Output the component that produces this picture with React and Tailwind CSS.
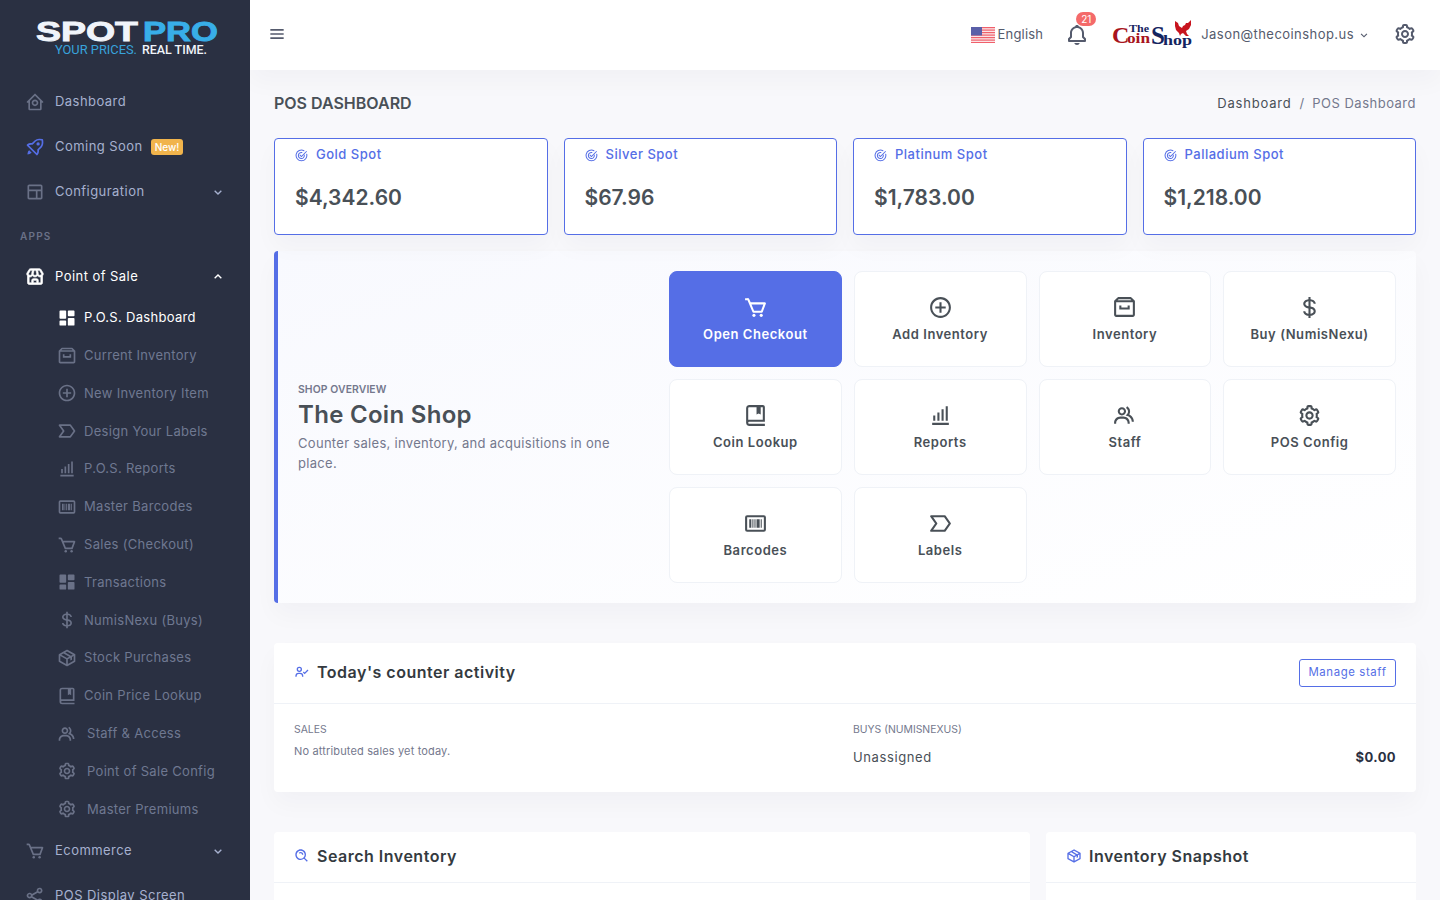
import {
  BiHomeCircle, BiRocket, BiLayout, BiStore, BiSolidDashboard, BiArchive, BiPlusCircle, BiLabel,
  BiBarChartAlt, BiBarcode, BiCart, BiDollar, BiPackage, BiBookBookmark, BiGroup, BiCog, BiShareAlt,
  BiChevronDown, BiChevronUp, BiMenu, BiBell, BiUserCheck, BiSearchAlt,
} from 'react-icons/bi'

const subItems = [
  { label: 'P.O.S. Dashboard', icon: BiSolidDashboard, active: true },
  { label: 'Current Inventory', icon: BiArchive },
  { label: 'New Inventory Item', icon: BiPlusCircle },
  { label: 'Design Your Labels', icon: BiLabel },
  { label: 'P.O.S. Reports', icon: BiBarChartAlt },
  { label: 'Master Barcodes', icon: BiBarcode },
  { label: 'Sales (Checkout)', icon: BiCart },
  { label: 'Transactions', icon: BiSolidDashboard },
  { label: 'NumisNexu (Buys)', icon: BiDollar },
  { label: 'Stock Purchases', icon: BiPackage },
  { label: 'Coin Price Lookup', icon: BiBookBookmark },
  { label: 'Staff & Access', icon: BiGroup, wide: true },
  { label: 'Point of Sale Config', icon: BiCog, wide: true },
  { label: 'Master Premiums', icon: BiCog, wide: true },
]

const spots = [
  { name: 'Gold Spot', price: '$4,342.60' },
  { name: 'Silver Spot', price: '$67.96' },
  { name: 'Platinum Spot', price: '$1,783.00' },
  { name: 'Palladium Spot', price: '$1,218.00' },
]

const tiles = [
  { label: 'Open Checkout', icon: BiCart, primary: true },
  { label: 'Add Inventory', icon: BiPlusCircle },
  { label: 'Inventory', icon: BiArchive },
  { label: 'Buy (NumisNexu)', icon: BiDollar },
  { label: 'Coin Lookup', icon: BiBookBookmark },
  { label: 'Reports', icon: BiBarChartAlt },
  { label: 'Staff', icon: BiGroup },
  { label: 'POS Config', icon: BiCog },
  { label: 'Barcodes', icon: BiBarcode },
  { label: 'Labels', icon: BiLabel },
]

function SpotIcon() {
  return (
    <svg viewBox="0 0 14 14" className="w-[13px] h-[13px] text-[#556ee6]" fill="none" stroke="currentColor" strokeWidth="1.1" strokeLinecap="round">
      <path d="M12.6 5.6A5.8 5.8 0 1 1 9.6 1.8" />
      <path d="M10 6.6A3.2 3.2 0 1 1 7.4 3.9" />
      <path d="M5.4 6.6l1.5 1.5 5.4-5.4" />
    </svg>
  )
}

function SpotLogo() {
  return (
    <div className="h-[79.5px]">
      <svg viewBox="0 0 250 79" className="w-[250px] h-[79px] block">
        <text x="36" y="41" textLength="102" lengthAdjust="spacingAndGlyphs" fontFamily="Liberation Sans, sans-serif" fontWeight="700" fontSize="28" fill="#f0f4fa" stroke="#f0f4fa" strokeWidth="0.9">SPOT</text>
        <text x="143" y="41" textLength="75" lengthAdjust="spacingAndGlyphs" fontFamily="Liberation Sans, sans-serif" fontWeight="700" fontSize="28" fill="#38aee8" stroke="#38aee8" strokeWidth="0.9">PRO</text>
        <text x="55" y="54" textLength="82" lengthAdjust="spacingAndGlyphs" fontFamily="Roboto, sans-serif" fontWeight="400" fontSize="12" fill="#38a3dc">YOUR PRICES.</text>
        <text x="142" y="54" textLength="65" lengthAdjust="spacingAndGlyphs" fontFamily="Roboto, sans-serif" fontWeight="500" fontSize="12" fill="#f0f4fa">REAL TIME.</text>
      </svg>
    </div>
  )
}

function ShopLogo() {
  return (
    <svg viewBox="0 0 82 30" className="w-[82px] h-[30px] block">
      <text x="0" y="23" fontFamily="Liberation Serif, serif" fontWeight="700" fontSize="24" fill="#a81420">C</text>
      <text x="15" y="23" textLength="23" lengthAdjust="spacingAndGlyphs" fontFamily="Liberation Serif, serif" fontWeight="700" fontSize="14" fill="#a81420">oin</text>
      <text x="17" y="12" textLength="20" lengthAdjust="spacingAndGlyphs" fontFamily="Liberation Serif, serif" fontWeight="700" fontSize="10" fill="#14245f">The</text>
      <text x="39" y="24" fontFamily="Liberation Serif, serif" fontWeight="700" fontSize="25" fill="#14245f">S</text>
      <text x="51" y="25" textLength="29" lengthAdjust="spacingAndGlyphs" fontFamily="Liberation Serif, serif" fontWeight="700" fontSize="14" fill="#14245f">hop</text>
      <path d="M63 1l3 2 1 3 3 2 1-2 2-1 1-2 2 0 3-3 0 5-2 4-3 2 1 3 2 2-3 0-3-3-2 1-1 2-1-3-3-3-1-4z" fill="#c8141e" />
    </svg>
  )
}

function Flag() {
  return (
    <svg viewBox="0 0 24 16" className="w-6 h-4 block">
      <rect width="24" height="16" fill="#fbe4e6" />
      {[0, 2.5, 5, 7.5, 10, 12.5, 15].map((y) => (
        <rect key={y} y={y} width="24" height="1.2" fill="#f0606b" />
      ))}
      <rect width="11" height="8.5" fill="#5a5fa8" />
    </svg>
  )
}

function TopItem({ icon: Icon, label, chevron, badge, white, iconColor }) {
  return (
    <div className={`h-[45px] flex items-center pl-[25px] pr-[24px] text-[13px] tracking-[0.45px] ${white ? 'text-white' : 'text-[#a6b0cf]'}`}>
      <Icon className={`w-5 h-5 shrink-0 ${iconColor || 'text-[#6a7187]'} ${white ? '[stroke-width:0.8]' : ''}`} />
      <span className="ml-[10px]">{label}</span>
      {badge && <span className="ml-[8px] rounded-[3px] bg-[#f1b44c] text-white text-[10px] font-medium leading-none px-[4px] py-[3px] tracking-normal">{badge}</span>}
      {chevron === 'down' && <BiChevronDown className={`ml-auto w-4 h-4 ${white ? 'text-white' : 'text-[#a6b0cf]'}`} />}
      {chevron === 'up' && <BiChevronUp className="ml-auto w-4 h-4 text-white" />}
    </div>
  )
}

function SubItem({ item }) {
  const Icon = item.icon
  return (
    <div className={`h-[37.8px] flex items-center pl-[57px] text-[13px] tracking-[0.3px] ${item.active ? 'text-white' : 'text-[#6f7891]'}`}>
      <Icon className={`w-5 h-5 shrink-0 ${item.active ? 'text-white' : 'text-[#6a7187]'}`} />
      <span className={item.wide ? 'ml-[10px]' : 'ml-[7px]'}>{item.label}</span>
    </div>
  )
}

function Sidebar() {
  return (
    <aside className="w-[250px] shrink-0 h-screen overflow-hidden bg-[#2a3042]">
      <SpotLogo />
      <TopItem icon={BiHomeCircle} label="Dashboard" />
      <TopItem icon={BiRocket} label="Coming Soon" badge="New!" iconColor="text-[#556ee6]" />
      <TopItem icon={BiLayout} label="Configuration" chevron="down" />
      <div className="h-[39.5px] flex items-center pl-5 pt-1 text-[10px] font-semibold tracking-[1.2px] text-[#6a7187]">APPS</div>
      <TopItem icon={BiStore} label="Point of Sale" chevron="up" white iconColor="text-white" />
      {subItems.map((item) => (
        <SubItem key={item.label} item={item} />
      ))}
      <TopItem icon={BiCart} label="Ecommerce" chevron="down" />
      <TopItem icon={BiShareAlt} label="POS Display Screen" />
    </aside>
  )
}

function Header() {
  return (
    <header className="h-[70px] shrink-0 bg-white flex items-center pl-[16.5px] pr-[23px] shadow-[0_12px_24px_rgba(18,38,63,0.03)] relative">
      <BiMenu className="w-5 h-5 -mt-[2px] text-[#555b6d]" />
      <div className="ml-auto flex items-center">
        <Flag />
        <span className="ml-[3px] text-[13px] tracking-[0.2px] text-[#555b6d]">English</span>
        <div className="relative ml-[21.5px]">
          <BiBell className="w-6 h-6 text-[#555b6d]" />
          <span className="absolute -top-[11px] left-[11.5px] w-5 h-[14px] rounded-full bg-[#f46a6a] text-white text-[10px] leading-[14px] text-center">21</span>
        </div>
        <div className="ml-[23.5px]"><ShopLogo /></div>
        <span className="ml-[7px] text-[13px] tracking-[0.45px] text-[#555b6d]">Jason@thecoinshop.us</span>
        <BiChevronDown className="ml-[2.5px] w-[14px] h-[14px] text-[#555b6d]" />
        <BiCog className="ml-[22.5px] w-6 h-6 -mt-[2px] text-[#555b6d]" />
      </div>
    </header>
  )
}

function Tile({ tile }) {
  const Icon = tile.icon
  return (
    <div className={`h-[96px] rounded-lg border flex flex-col items-center pt-[23px] text-[13px] font-semibold tracking-[0.55px] ${tile.primary ? 'bg-[#556ee6] border-[#556ee6] text-white' : 'bg-white border-[#eff2f7] text-[#495057]'}`}>
      <Icon className="w-[25px] h-[25px]" />
      <span className="mt-[5px]">{tile.label}</span>
    </div>
  )
}

function CardHead({ icon: Icon, title, className, children }) {
  return (
    <div className={`flex items-center border-b border-[#eff2f7] px-5 ${className}`}>
      <Icon className="w-4 h-4 -mt-[3px] text-[#556ee6]" />
      <h3 className="ml-[7px] -mt-[2px] text-[16px] font-semibold tracking-[0.5px] text-[#343a40]">{title}</h3>
      {children}
    </div>
  )
}

export default function App() {
  return (
    <div className="flex h-screen overflow-hidden bg-[#f8f8fb] [font-family:Inter,sans-serif]">
      <Sidebar />
      <div className="flex-1 min-w-0 flex flex-col h-screen overflow-hidden">
        <Header />
        <main className="flex-1 overflow-hidden px-6">
          <div className="h-[68px] pb-[2px] flex items-center justify-between">
            <h1 className="text-[16px] font-semibold text-[#495057]">POS DASHBOARD</h1>
            <div className="mt-[2px] text-[13px] flex gap-2">
              <span className="text-[#495057] tracking-[0.8px]">Dashboard</span>
              <span className="text-[#74788d]">/</span>
              <span className="text-[#74788d] tracking-[0.5px]">POS Dashboard</span>
            </div>
          </div>

          <div className="grid grid-cols-4 gap-4">
            {spots.map((s) => (
              <div key={s.name} className="h-[97px] bg-white border border-[#556ee6] rounded-[4px] px-5 pt-[6px] shadow-[0_12px_24px_rgba(18,38,63,0.03)]">
                <div className="flex items-center h-5 text-[13px] font-medium tracking-[0.5px] text-[#556ee6]">
                  <SpotIcon />
                  <span className="ml-2">{s.name}</span>
                </div>
                <div className="mt-[16px] text-[21px] leading-[33px] font-semibold text-[#495057]">{s.price}</div>
              </div>
            ))}
          </div>

          <section className="mt-4 h-[352px] flex rounded-[4px] border-l-4 border-[#556ee6] bg-gradient-to-br from-[#f8f9fe] to-white shadow-[0_12px_24px_rgba(18,38,63,0.03)]">
            <div className="flex-1 min-w-0 pl-5 pr-10 pt-[131.5px]">
              <div className="text-[10.4px] font-semibold tracking-[0.1px] text-[#74788d] leading-[14px]">SHOP OVERVIEW</div>
              <div className="text-[24px] font-semibold text-[#495057] leading-[36px] tracking-[0.3px]">The Coin Shop</div>
              <p className="text-[13px] leading-[20px] tracking-[0.3px] text-[#74788d]">Counter sales, inventory, and acquisitions in one place.</p>
            </div>
            <div className="w-[727px] shrink-0 mr-5 mt-5 grid grid-cols-4 gap-3 content-start">
              {tiles.map((t) => (
                <Tile key={t.label} tile={t} />
              ))}
            </div>
          </section>

          <section className="mt-10 h-[149px] bg-white rounded-[4px] shadow-[0_12px_24px_rgba(18,38,63,0.03)]">
            <CardHead icon={BiUserCheck} title="Today's counter activity">
              <button className="ml-auto my-4 h-7 w-[97px] rounded-[3px] border border-[#556ee6] text-[11.4px] tracking-[0.6px] text-[#556ee6]">Manage staff</button>
            </CardHead>
            <div className="grid grid-cols-2 gap-4 px-5 pt-[19px]">
              <div>
                <div className="text-[10.4px] leading-[13px] text-[#74788d]">SALES</div>
                <div className="mt-[6px] text-[11px] leading-[18px] tracking-[0.15px] text-[#74788d]">No attributed sales yet today.</div>
              </div>
              <div>
                <div className="text-[10.4px] leading-[13px] text-[#74788d]">BUYS (NUMISNEXUS)</div>
                <div className="mt-[11px] flex items-center justify-between text-[13px] leading-[20px]">
                  <span className="text-[#495057] tracking-[0.6px]">Unassigned</span>
                  <span className="font-bold text-[#2a3042] tracking-[0.4px]">$0.00</span>
                </div>
              </div>
            </div>
          </section>

          <div className="mt-10 flex gap-4">
            <section className="w-[756px] h-[200px] bg-white rounded-[4px]">
              <CardHead icon={BiSearchAlt} title="Search Inventory" className="h-[51px]" />
            </section>
            <section className="flex-1 h-[200px] bg-white rounded-[4px]">
              <CardHead icon={BiPackage} title="Inventory Snapshot" className="h-[51px]" />
            </section>
          </div>
        </main>
      </div>
    </div>
  )
}
